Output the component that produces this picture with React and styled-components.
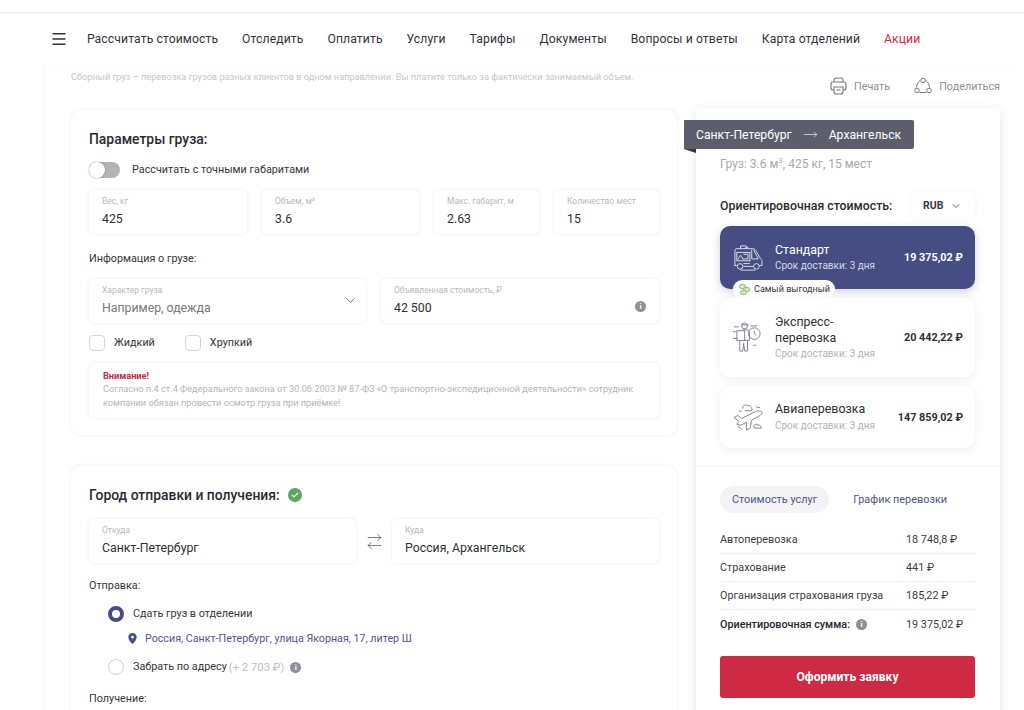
import styled, { createGlobalStyle } from "styled-components";
import { ChevronDown, Menu, MoveRight, ArrowRightLeft } from "lucide-react";

const NAV = ["Рассчитать стоимость", "Отследить", "Оплатить", "Услуги", "Тарифы", "Документы", "Вопросы и ответы", "Карта отделений"];

const COSTS = [
  { name: "Автоперевозка", value: "18 748,8 ₽" },
  { name: "Страхование", value: "441 ₽" },
  { name: "Организация страхования груза", value: "185,22 ₽" },
];

function TruckIcon() {
  return (
    <svg width="30" height="28" viewBox="0 0 32 30" fill="none" stroke="#fff" strokeWidth="1" opacity="0.85">
      <path d="M8 5V2h6l2 2h-3v1" />
      <path d="M2 23V7a2 2 0 0 1 2-2h17c2 0 3 1 4 3l4 7c1 1 2 2 2 4v4h-3" />
      <path d="M22 6l5 10h-7V6" />
      <rect x="4" y="9" width="14" height="9" />
      <path d="M5 17l3-5 3 5M11 11h5v5h-5" />
      <circle cx="7.500" cy="24" r="3" />
      <circle cx="25" cy="24" r="3" />
      <path d="M1 23h3M11 24h11M8 28h16M11 21h7" />
    </svg>
  );
}

function CourierIcon() {
  return (
    <svg width="30" height="33" viewBox="0 0 31 34" fill="none" stroke="#7f838f" strokeWidth="1">
      <circle cx="12" cy="5" r="3" />
      <path d="M8 4h8M1 6h5M0 11h3M0 18h5" />
      <rect x="4" y="10" width="8" height="10" />
      <path d="M10 9h5l2 3v8h-5" />
      <path d="M7 20v11h3l1-8 1 8h3V20" />
      <circle cx="22" cy="13" r="6" />
      <path d="M22 10v3l2 2M18 5h7M21 25h3" />
    </svg>
  );
}

function PlaneIcon() {
  return (
    <svg width="30" height="30" viewBox="0 0 31 31" fill="none" stroke="#7f838f" strokeWidth="1">
      <path d="M10 7a3 3 0 0 1 5-3 3 3 0 0 1 4 2 2 2 0 0 1 0 3h-7" />
      <path d="M1 16l4-2 4 3 14-7c3-1 7-1 7 1s-3 4-6 5l-5 3-1 8-4 2 0-8-6 3-4-1 2-3z" />
      <path d="M22 27a2.500 2.500 0 0 1 4-3 2.500 2.500 0 0 1 3 3zM5 25l4 3M24 5l4 1M6 9l3 1" />
    </svg>
  );
}

function CoinsIcon() {
  return (
    <svg width="13" height="13" viewBox="0 0 13 13" fill="#d7e6b8" stroke="#86a86e" strokeWidth="0.8">
      <ellipse cx="4.500" cy="3.500" rx="3.200" ry="2.200" />
      <ellipse cx="8.500" cy="6.500" rx="3.200" ry="2.200" />
      <ellipse cx="5.500" cy="9.500" rx="3.200" ry="2.200" />
    </svg>
  );
}

function PrintIcon() {
  return (
    <svg width="17" height="18" viewBox="0 0 17 18" fill="none" stroke="#777" strokeWidth="1.1">
      <path d="M4 5V3a2 2 0 0 1 2-2h5a2 2 0 0 1 2 2v2" />
      <path d="M4 13H3a2 2 0 0 1-2-2V7a2 2 0 0 1 2-2h11a2 2 0 0 1 2 2v4a2 2 0 0 1-2 2h-1" />
      <path d="M4 10h9v5a2 2 0 0 1-2 2H6a2 2 0 0 1-2-2zM6.500 13h4" />
    </svg>
  );
}

function ShareIcon() {
  return (
    <svg width="18" height="18" viewBox="0 0 18 18" fill="none" stroke="#777" strokeWidth="1">
      <circle cx="9" cy="3.500" r="2.300" />
      <circle cx="3" cy="13.500" r="2.300" />
      <circle cx="15" cy="13.500" r="2.300" />
      <path d="M6 3.500C4 5 2.500 8 2.500 10.500M12 3.500c2 1.500 3.500 4.500 3.500 7M5.500 15.500h7" />
    </svg>
  );
}

function InfoDot() {
  return <Info>i</Info>;
}

function Field({ label, value, muted, children }) {
  return (
    <FieldBox>
      <FieldLabel>{label}</FieldLabel>
      <FieldValue $muted={muted}>{value}</FieldValue>
      {children}
    </FieldBox>
  );
}

export default function App() {
  return (
    <>
      <GlobalStyle />
      <TopStrip />
      <Nav>
        <Burger size={18} strokeWidth={1.7} />
        {NAV.map((item) => (
          <NavItem key={item}>{item}</NavItem>
        ))}
        <NavItem $accent>Акции</NavItem>
      </Nav>
      <Page>
        <LeftColumn>
          <Hint>Сборный груз – перевозка грузов разных клиентов в одном направлении. Вы платите только за фактически занимаемый объем.</Hint>
          <Card>
            <CardTitle>Параметры груза:</CardTitle>
            <ToggleRow>
              <Toggle />
              <BodyText>Рассчитать с точными габаритами</BodyText>
            </ToggleRow>
            <FourFields>
              <Field label="Вес, кг" value="425" />
              <Field label="Объем, м³" value="3.6" />
              <Field label="Макс. габарит, м" value="2.63" />
              <Field label="Количество мест" value="15" />
            </FourFields>
            <SectionLabel $top={18}>Информация о грузе:</SectionLabel>
            <TwoFields>
              <Field label="Характер груза" value="Например, одежда" muted>
                <FieldChevron size={15} strokeWidth={1.2} />
              </Field>
              <Field label="Объявленная стоимость, ₽" value="42 500">
                <FieldInfo>
                  <InfoDot />
                </FieldInfo>
              </Field>
            </TwoFields>
            <Checks>
              <CheckItem>
                <CheckBox />
                <BodyText>Жидкий</BodyText>
              </CheckItem>
              <CheckItem>
                <CheckBox />
                <BodyText>Хрупкий</BodyText>
              </CheckItem>
            </Checks>
            <Warning>
              <WarningTitle>Внимание!</WarningTitle>
              Согласно п.4 ст.4 Федерального закона от 30.06.2003 № 87-ФЗ «О транспортно-экспедиционной деятельности» сотрудник компании обязан провести осмотр груза при приёмке!
            </Warning>
          </Card>
          <CityCard>
            <TitleRow>
              <CardTitle>Город отправки и получения:</CardTitle>
              <CheckCircle>
                <svg width="8" height="8" viewBox="0 0 8 8" fill="none" stroke="#fff" strokeWidth="1.2">
                  <path d="M1 4l2 2 4-4" />
                </svg>
              </CheckCircle>
            </TitleRow>
            <CityFields>
              <Field label="Откуда" value="Санкт-Петербург" />
              <Swap size={19} strokeWidth={1} />
              <Field label="Куда" value="Россия, Архангельск" />
            </CityFields>
            <SectionLabel $top={16}>Отправка:</SectionLabel>
            <Options>
              <Option>
                <Radio $checked />
                <BodyText>Сдать груз в отделении</BodyText>
              </Option>
              <Address>
                <svg width="9" height="11" viewBox="0 0 9 11">
                  <path fillRule="evenodd" fill="#454d83" d="M4.500 0a4.200 4.200 0 0 1 4.200 4.200C8.700 7 4.500 11 4.500 11S.3 7 .3 4.200A4.200 4.200 0 0 1 4.500 0zm0 2.800a1.400 1.400 0 1 0 0 2.800 1.400 1.400 0 0 0 0-2.800z" />
                </svg>
                Россия, Санкт-Петербург, улица Якорная, 17, литер Ш
              </Address>
              <Option>
                <Radio />
                <BodyText>Забрать по адресу</BodyText>
                <Extra>(+ 2 703 ₽)</Extra>
                <InfoDot />
              </Option>
            </Options>
            <SectionLabel $top={17}>Получение:</SectionLabel>
          </CityCard>
        </LeftColumn>
        <RightColumn>
          <Actions>
            <ActionItem>
              <PrintIcon />
              Печать
            </ActionItem>
            <ActionItem>
              <ShareIcon />
              Поделиться
            </ActionItem>
          </Actions>
          <Summary>
            <RouteTag>
              Санкт-Петербург
              <MoveRight size={15} strokeWidth={1} />
              Архангельск
            </RouteTag>
            <Cargo>
              Груз: 3.6 м<sup>3</sup>, 425 кг, 15 мест
            </Cargo>
            <CostHeader>
              <CostTitle>Ориентировочная стоимость:</CostTitle>
              <Currency>
                RUB
                <ChevronDown size={12} strokeWidth={1.6} />
              </Currency>
            </CostHeader>
            <Plans>
              <Plan $active $height={63}>
                <TruckIcon />
                <PlanText>
                  <PlanName>Стандарт</PlanName>
                  <PlanTerm $active>Срок доставки: 3 дня</PlanTerm>
                </PlanText>
                <PlanPrice>19 375,02 ₽</PlanPrice>
                <BestBadge>
                  <CoinsIcon />
                  Самый выгодный
                </BestBadge>
              </Plan>
              <Plan $height={79}>
                <CourierIcon />
                <PlanText>
                  <PlanName>
                    Экспресс-
                    <br />
                    перевозка
                  </PlanName>
                  <PlanTerm>Срок доставки: 3 дня</PlanTerm>
                </PlanText>
                <PlanPrice>20 442,22 ₽</PlanPrice>
              </Plan>
              <Plan $height={62}>
                <PlaneIcon />
                <PlanText>
                  <PlanName>Авиаперевозка</PlanName>
                  <PlanTerm>Срок доставки: 3 дня</PlanTerm>
                </PlanText>
                <PlanPrice>147 859,02 ₽</PlanPrice>
              </Plan>
            </Plans>
            <Divider />
            <Tabs>
              <Tab $active>Стоимость услуг</Tab>
              <Tab>График перевозки</Tab>
            </Tabs>
            <CostTable>
              {COSTS.map((row) => (
                <CostRow key={row.name}>
                  <span>{row.name}</span>
                  <CostValue>{row.value}</CostValue>
                </CostRow>
              ))}
              <CostRow $total>
                <TotalName>
                  Ориентировочная сумма:
                  <InfoDot />
                </TotalName>
                <CostValue>19 375,02 ₽</CostValue>
              </CostRow>
            </CostTable>
            <SubmitButton>Оформить заявку</SubmitButton>
          </Summary>
        </RightColumn>
      </Page>
    </>
  );
}

const GlobalStyle = createGlobalStyle`
  html, body {
    margin: 0;
    height: 710px;
    overflow: hidden;
    background: #fff;
    font-family: Roboto, "Liberation Sans", sans-serif;
    color: #2f2f33;
  }
  * { box-sizing: border-box; }
`;

const TopStrip = styled.div`
  height: 13px;
  border-bottom: 1px solid #e6e6e6;
`;

const Nav = styled.nav`
  height: 52px;
  padding-left: 52px;
  display: flex;
  align-items: center;
  gap: 23.900px;
`;

const Burger = styled(Menu)`
  color: #333;
  margin-right: -5px;
  margin-left: -2px;
`;

const NavItem = styled.a`
  font-size: 12.200px;
  letter-spacing: 0.1px;
  color: ${({ $accent }) => ($accent ? "#d12c45" : "#34343a")};
`;

const Page = styled.main`
  margin-left: 46px;
  display: flex;
  height: 645px;
  overflow: hidden;
  box-shadow: -3px 0 6px -3px rgba(90, 90, 130, 0.08);
`;

const LeftColumn = styled.div`
  width: 650px;
  padding: 6px 0 0 25px;
`;

const Hint = styled.p`
  margin: 0 0 27px;
  font-size: 9.200px;
  line-height: 12px;
  color: #c6c6c9;
  white-space: nowrap;
`;

const Card = styled.section`
  width: 606px;
  height: 325px;
  padding: 20px 18px 0;
  border-radius: 10px;
  box-shadow: 0 0 4px rgba(60, 60, 90, 0.09);
`;

const CityCard = styled(Card)`
  height: 260px;
  margin-top: 31px;
`;

const CardTitle = styled.h2`
  margin: 0;
  font-size: 13.900px;
  line-height: 18px;
  font-weight: 500;
  color: #2b2b30;
`;

const TitleRow = styled.div`
  display: flex;
  align-items: center;
  gap: 8px;
`;

const CheckCircle = styled.span`
  width: 14px;
  height: 14px;
  border-radius: 50%;
  background: #58a95f;
  display: flex;
  align-items: center;
  justify-content: center;
`;

const ToggleRow = styled.div`
  margin-top: 14px;
  display: flex;
  align-items: center;
  gap: 12px;
  height: 16px;
`;

const Toggle = styled.span`
  width: 31px;
  height: 16px;
  border-radius: 8px;
  background: #b4b4b4;
  position: relative;

  &::before {
    content: "";
    position: absolute;
    left: 0;
    top: 0;
    width: 16px;
    height: 16px;
    border-radius: 50%;
    background: #fff;
    box-shadow: 0 0 2px rgba(0, 0, 0, 0.35);
  }
`;

const BodyText = styled.span`
  font-size: 10.800px;
  line-height: 14px;
  color: #35353a;
`;

const FourFields = styled.div`
  margin-top: 12px;
  display: grid;
  grid-template-columns: 158px 157px 105px 105px;
  gap: 15px;
`;

const FieldBox = styled.div`
  position: relative;
  height: 44px;
  padding: 6px 13px 0;
  border-radius: 5px;
  background: #fff;
  box-shadow: 0 0 3px rgba(60, 60, 90, 0.13);
`;

const FieldLabel = styled.div`
  font-size: 8.500px;
  line-height: 10px;
  color: #b9b9bc;
`;

const FieldValue = styled.div`
  margin-top: 4.500px;
  font-size: 12.300px;
  line-height: 16px;
  color: ${({ $muted }) => ($muted ? "#77777c" : "#2f2f33")};
`;

const FieldChevron = styled(ChevronDown)`
  position: absolute;
  right: 8px;
  top: 14px;
  color: #444;
`;

const FieldInfo = styled.span`
  position: absolute;
  right: 13px;
  top: 15px;
`;

const Info = styled.span`
  display: inline-flex;
  align-items: center;
  justify-content: center;
  width: 11px;
  height: 11px;
  border-radius: 50%;
  background: #8e8f97;
  color: #fff;
  font-size: 8px;
  font-weight: 700;
`;

const SectionLabel = styled.div`
  margin-top: ${({ $top }) => $top}px;
  font-size: 10.800px;
  line-height: 14px;
  color: #35353a;
`;

const TwoFields = styled.div`
  margin-top: 13px;
  display: grid;
  grid-template-columns: 277px 278px;
  gap: 15px;
`;

const Checks = styled.div`
  margin-top: 12px;
  display: flex;
  gap: 30px;
`;

const CheckItem = styled.label`
  display: flex;
  align-items: center;
  gap: 9px;
`;

const CheckBox = styled.span`
  width: 16px;
  height: 16px;
  border: 1px solid #d4d4d8;
  border-radius: 4px;
`;

const Warning = styled.div`
  margin-top: 12px;
  height: 55px;
  padding: 7px 14px;
  border-radius: 5px;
  font-size: 9.200px;
  line-height: 14px;
  color: #b4b4b8;
  box-shadow: 0 0 3px rgba(60, 60, 90, 0.13);
`;

const WarningTitle = styled.div`
  font-weight: 700;
  line-height: 12px;
  color: #c0294a;
`;

const CityFields = styled.div`
  margin-top: 15px;
  display: grid;
  grid-template-columns: 267px 1fr 267px;
  align-items: center;
`;

const Swap = styled(ArrowRightLeft)`
  justify-self: center;
  color: #555;
`;

const Options = styled.div`
  margin-top: 13px;
  padding-left: 19px;
  display: flex;
  flex-direction: column;
`;

const Option = styled.div`
  display: flex;
  align-items: center;
  gap: 6px;
  height: 16px;
`;

const Radio = styled.span`
  width: 16px;
  height: 16px;
  margin-right: 3px;
  border-radius: 50%;
  background: #fff;
  border: ${({ $checked }) => ($checked ? "4.500px solid #454d83" : "1px solid #d4d4d8")};
`;

const Address = styled.div`
  margin: 8px 0 13px 20px;
  height: 16px;
  display: flex;
  align-items: center;
  gap: 8px;
  font-size: 10.700px;
  color: #50568a;
`;

const Extra = styled.span`
  font-size: 11.300px;
  color: #c0c0c4;
  margin-left: -4px;
`;

const RightColumn = styled.div`
  width: 304px;
`;

const Actions = styled.div`
  height: 43px;
  padding-top: 12px;
  display: flex;
  justify-content: flex-end;
  gap: 24px;
`;

const ActionItem = styled.div`
  display: flex;
  align-items: center;
  gap: 7px;
  height: 18px;
  font-size: 10.800px;
  color: #8f8f94;
`;

const Summary = styled.aside`
  position: relative;
  height: 620px;
  padding: 47px 25px 0 24px;
  background: #fff;
  border-radius: 4px;
  box-shadow: 0 2px 10px rgba(90, 100, 170, 0.16);
`;

const RouteTag = styled.div`
  position: absolute;
  left: -12px;
  top: 12px;
  width: 230px;
  height: 29px;
  padding-left: 12px;
  display: flex;
  align-items: center;
  gap: 11px;
  background: #5d5e6c;
  border-radius: 0 2px 2px 0;
  color: #fff;
  font-size: 12.200px;

  &::after {
    content: "";
    position: absolute;
    left: 0;
    top: 29px;
    border-top: 4px solid #34343e;
    border-left: 12px solid transparent;
  }
`;

const Cargo = styled.div`
  font-size: 12px;
  line-height: 18px;
  color: #a8a8ac;
  white-space: nowrap;

  sup {
    font-size: 8px;
    line-height: 0;
  }
`;

const CostHeader = styled.div`
  margin-top: 19px;
  height: 27px;
  display: flex;
  align-items: center;
  justify-content: space-between;
`;

const CostTitle = styled.div`
  font-size: 12.300px;
  font-weight: 500;
  color: #2b2b30;
`;

const Currency = styled.div`
  width: 64px;
  height: 27px;
  padding-left: 12px;
  display: flex;
  align-items: center;
  gap: 7px;
  border-radius: 5px;
  font-size: 10.500px;
  font-weight: 700;
  color: #3a3a40;
  box-shadow: 0 0 4px rgba(60, 60, 90, 0.05);
`;

const Plans = styled.div`
  margin-top: 7px;
  display: flex;
  flex-direction: column;
  gap: 9px;
`;

const Plan = styled.div`
  position: relative;
  height: ${({ $height }) => $height}px;
  padding: 0 12px 0 13px;
  display: grid;
  grid-template-columns: 42px 1fr auto;
  align-items: center;
  border-radius: 10px;
  background: ${({ $active }) => ($active ? "#454d83" : "#fff")};
  color: ${({ $active }) => ($active ? "#fff" : "#2f2f33")};
  box-shadow: ${({ $active }) => ($active ? "0 3px 8px rgba(69, 77, 131, 0.25)" : "0 2px 9px rgba(60, 60, 90, 0.08)")};
`;

const PlanText = styled.div`
  padding-left: 0;
`;

const PlanName = styled.div`
  font-size: 12.400px;
  line-height: 15.500px;
`;

const PlanTerm = styled.div`
  margin-top: 2px;
  font-size: 10px;
  line-height: 14px;
  color: ${({ $active }) => ($active ? "#d6d8e8" : "#b4b4b8")};
`;

const PlanPrice = styled.div`
  font-size: 10.800px;
  font-weight: 700;
  white-space: nowrap;
`;

const BestBadge = styled.div`
  position: absolute;
  left: 13px;
  top: 54px;
  height: 18px;
  padding: 0 5px 0 5px;
  display: flex;
  align-items: center;
  gap: 3px;
  border-radius: 10px;
  background: #fff;
  font-size: 9.100px;
  color: #35353a;
`;

const Divider = styled.div`
  margin: 18px -25px 0 -24px;
  border-top: 1px dotted #eeeef2;
`;

const Tabs = styled.div`
  margin-top: 19px;
  display: flex;
  gap: 0;
`;

const Tab = styled.div`
  height: 27px;
  padding: 0 12px;
  margin-right: 12px;
  display: flex;
  align-items: center;
  border-radius: 14px;
  background: ${({ $active }) => ($active ? "#f3f3f5" : "transparent")};
  font-size: 10.900px;
  color: #50568a;
`;

const CostTable = styled.div`
  margin-top: 13px;
`;

const CostRow = styled.div`
  height: 28px;
  display: grid;
  grid-template-columns: 186px 1fr;
  align-items: center;
  font-size: 10.800px;
  color: #3c3c42;
  border-bottom: ${({ $total }) => ($total ? "none" : "1px solid #efeff2")};
  font-weight: ${({ $total }) => ($total ? 500 : 400)};
`;

const CostValue = styled.span`
  font-weight: 400;
  white-space: nowrap;
`;

const TotalName = styled.span`
  display: flex;
  align-items: center;
  gap: 6px;
  color: #26262b;
`;

const SubmitButton = styled.button`
  display: block;
  width: 255px;
  height: 42px;
  margin-top: 18px;
  border: 0;
  border-radius: 3px;
  background: #cf2a43;
  color: #fff;
  font-family: inherit;
  font-size: 12.100px;
  font-weight: 700;
`;
